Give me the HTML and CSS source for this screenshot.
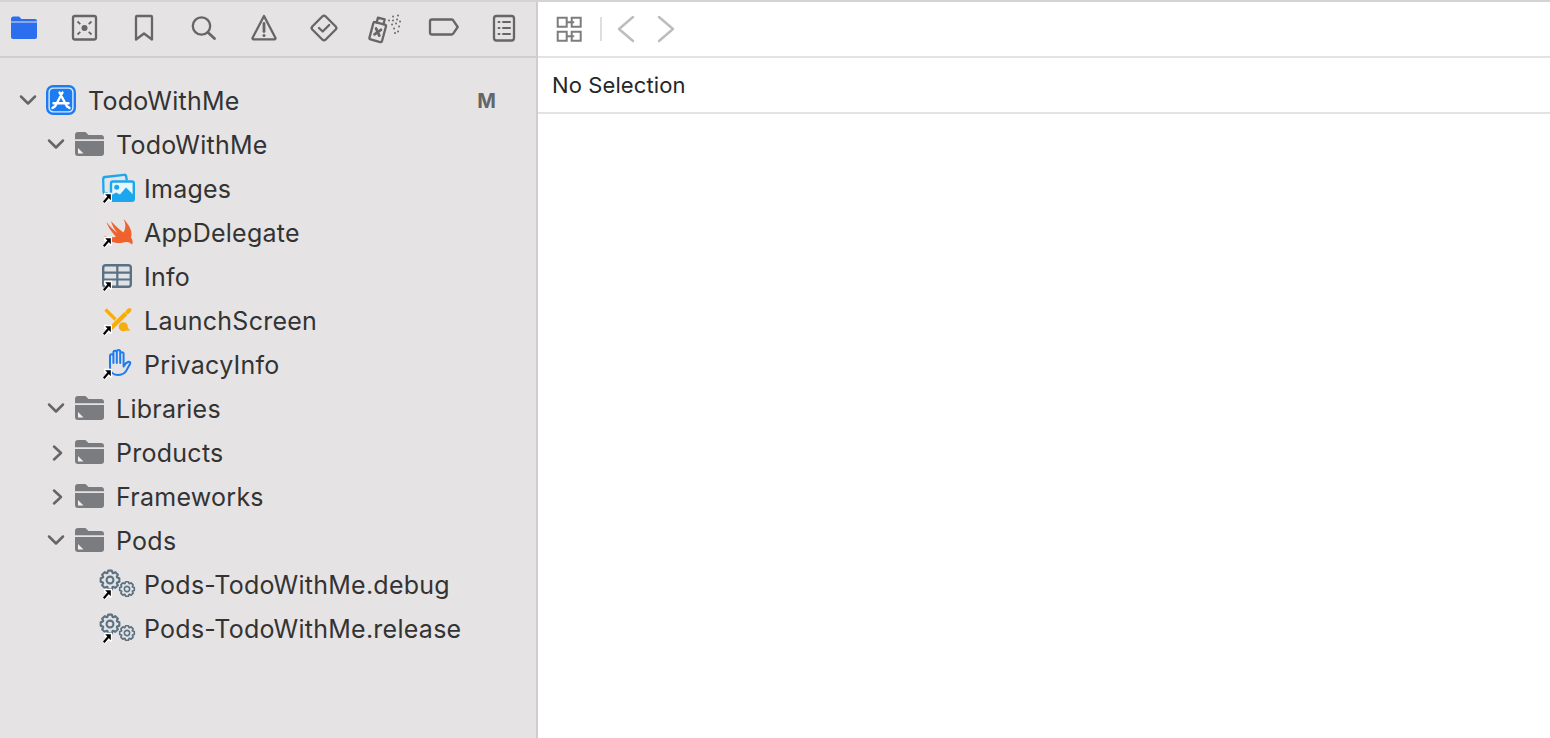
FILE: index.html
```html
<!DOCTYPE html>
<html lang="en">
<head>
<meta charset="utf-8">
<title>TodoWithMe</title>
<link rel="stylesheet" href="styles.css">
</head>
<body>
<svg class="defs" width="0" height="0" aria-hidden="true">
  <defs>
    <g id="folder">
      <path d="M1 6a3 3 0 0 1 3-3h7.500l3 3H27a3 3 0 0 1 3 3v1.200H1z"/>
      <path d="M1 12h29v12a3 3 0 0 1-3 3H4a3 3 0 0 1-3-3z"/>
      <path class="folder-mark" d="M4 19l5.500 5.500H4z"/>
    </g>
    <g id="alias">
      <path class="alias-bg" d="M2 19.800h8v8.700l-2 .3-1.300-1.600-3.200 3.500-3-2.300 3-3.500-1.500-1.600z"/>
      <path class="alias-line" d="M1.800 29.200L6.500 23.800"/>
      <path class="alias-head" d="M3.200 21.200H8.800v6z"/>
    </g>
    <path id="gear" d="M7.050-2.570L9.330-1.810 9.330 1.810 7.050 2.570 6.800 3.170 7.880 5.310 5.310 7.880 3.170 6.800 2.570 7.050 1.810 9.330-1.810 9.330-2.570 7.050-3.170 6.800-5.310 7.880-7.880 5.310-6.800 3.170-7.050 2.570-9.330 1.810-9.330-1.810-7.050-2.570-6.800-3.170-7.880-5.310-5.310-7.880-3.170-6.800-2.570-7.050-1.810-9.330 1.810-9.330 2.570-7.050 3.170-6.800 5.310-7.880 7.880-5.310 6.800-3.170zM3.400 0A3.400 3.400 0 1 1-3.400 0 3.400 3.400 0 1 1 3.400 0z"/>
    <g id="chev-down"><path d="M3 5.500l7 7 7-7"/></g>
    <g id="chev-right"><path d="M8 3.500l7 6.500-7 6.500"/></g>
    <g id="gears">
      <use href="#gear" transform="translate(8 11)"/>
      <use href="#gear" transform="translate(25 20) scale(.78)"/>
    </g>
  </defs>
</svg>

<div class="app">
  <aside class="navigator">
    <div class="tabs">
      <svg class="tab" viewBox="0 0 40 40"><path class="tab-active" d="M7 11a2.500 2.500 0 0 1 2.500-2.500h5.500l2.500 2.500H31a2 2 0 0 1 2 2v.5H7z"/><path class="tab-active" d="M7 14.600h26V29a2 2 0 0 1-2 2H9a2 2 0 0 1-2-2z"/></svg>
      <svg class="tab" viewBox="0 0 40 40"><rect class="st" x="9" y="8" width="23" height="23.500" rx="2"/><circle class="fl" cx="20.500" cy="20" r="3"/><path class="st spoke" d="M13.500 13.500l2.800 2.600M27.500 13.500l-2.800 2.600M13.500 26.500l2.800-2.600M27.500 26.500l-2.800-2.600"/></svg>
      <svg class="tab" viewBox="0 0 40 40"><path class="st" d="M12 9a1 1 0 0 1 1-1h14a1 1 0 0 1 1 1v22.500l-8-6-8 6z"/></svg>
      <svg class="tab" viewBox="0 0 40 40"><circle class="st" cx="17.500" cy="18" r="8.700"/><path class="st thick" d="M24 24.500l6.500 6"/></svg>
      <svg class="tab" viewBox="0 0 40 40"><path class="st" d="M20 8L31.500 30a1 1 0 0 1-.9 1.300H9.400a1 1 0 0 1-.9-1.300z"/><path class="st thick" d="M20 15.500v8"/><circle class="fl" cx="20" cy="27.500" r="1.500"/></svg>
      <svg class="tab" viewBox="0 0 40 40"><path class="st" d="M18.500 8.300a2.200 2.200 0 0 1 3 0L31.700 18.500a2.200 2.200 0 0 1 0 3L21.500 31.700a2.200 2.200 0 0 1-3 0L8.300 21.500a2.200 2.200 0 0 1 0-3z"/><path class="st" d="M15 20l3.700 3.500 6.500-6.500"/></svg>
      <svg class="tab" viewBox="0 0 40 40"><g transform="rotate(15 14 21)"><rect class="st" x="8" y="15" width="13" height="18" rx="1.500"/><path class="st" d="M11 15v-5h7v5"/><path class="st thick" d="M12 21l5 6M17 21l-5 6"/></g><path class="dots" d="M29 8.500h.1M34 7.500h.1M25 12.500h.1M29 12.500h.1M33 11.500h.1M36 13.500h.1M28 16.500h.1M32 15.500h.1M35 18.500h.1M30 20.500h.1M34 23.500h.1M31 25h.1"/></svg>
      <svg class="tab" viewBox="0 0 40 40"><path class="st" d="M8 11.500h19.500a2 2 0 0 1 1.700.9l4.500 6.600-4.500 6.600a2 2 0 0 1-1.700.9H8a2 2 0 0 1-2-2V13.500a2 2 0 0 1 2-2z"/></svg>
      <svg class="tab" viewBox="0 0 40 40"><rect class="st" x="10" y="8" width="20" height="24.500" rx="2.500"/><path class="st thin" d="M14.500 14h1M19 14h7M14.500 20h1M19 20h7M14.500 26h1M19 26h7"/></svg>
    </div>

    <ul class="tree">
      <li class="row d0"><svg class="chev" viewBox="0 0 20 20"><use href="#chev-down"/></svg>
        <svg class="ico" viewBox="0 0 32 32"><rect class="app-frame" x="1.200" y="1.200" width="27.600" height="27.600" rx="6"/><rect class="app-fill" x="3.800" y="3.800" width="22.400" height="22.400" rx="4"/><path class="app-a" d="M16.500 7.500L9 21.500M13.500 7.500L21 21.500M7.500 18.300h15M6.500 23l2.200-1.500M23.500 23l-2.200-1.500"/></svg>
        <span class="name">TodoWithMe</span><span class="badge">M</span></li>
      <li class="row d1"><svg class="chev" viewBox="0 0 20 20"><use href="#chev-down"/></svg>
        <svg class="ico folder" viewBox="0 0 32 32"><use href="#folder"/></svg>
        <span class="name">TodoWithMe</span></li>
      <li class="row d2"><span class="chev"></span>
        <svg class="ico" viewBox="0 0 32 32"><path class="img-back" d="M6 20.500H3.500a2 2 0 0 1-2-1.800L1.200 6a2 2 0 0 1 1.800-2L22 1.800a2 2 0 0 1 2.200 1.700l.6 4"/><rect class="img-front" x="9" y="8.500" width="22.800" height="19.200" rx="2"/><circle class="img-sun" cx="14.700" cy="14.300" r="2.500"/><path class="img-hill" d="M9 27v-4.500l5-3 4 2 6-7 8 8v4.500a1 1 0 0 1-1 1H10a1 1 0 0 1-1-1z"/><use href="#alias"/></svg>
        <span class="name">Images</span></li>
      <li class="row d2"><span class="chev"></span>
        <svg class="ico" viewBox="0 0 32 32"><path class="swift" d="M21.500 2C27.500 8 31 15 29 20.500 31 23 31 26 30 27.500 27.500 24.500 24 24.500 21 25.500 14 27.500 7 24.500 1.500 18.500 5.500 20.500 10 21 14 19.500 10 15.500 6 10 4.500 5 8 9.500 11.500 13 15.500 16 12.500 12.500 10 8.500 9 4 13 8.500 17 12.500 21.500 15.500 24 11 24 6.500 21.500 2z"/><use href="#alias"/></svg>
        <span class="name">AppDelegate</span></li>
      <li class="row d2"><span class="chev"></span>
        <svg class="ico" viewBox="0 0 32 32"><rect class="tbl" x="1.200" y="4.200" width="27.600" height="21.600" rx="2.500"/><path class="tbl-line" d="M1.200 11.700h27.600M1.200 18.500h27.600M15.300 4.200v21.600"/><use href="#alias"/></svg>
        <span class="name">Info</span></li>
      <li class="row d2"><span class="chev"></span>
        <svg class="ico" viewBox="0 0 32 32"><path class="ib-line" d="M3.500 4.500L13.500 14.500"/><path class="ib-pencil" d="M8.700 23.500L24 8.500"/><path class="ib-pencil tip" d="M25.500 7L27.500 5"/><circle class="ib-blob" cx="21.300" cy="21.700" r="4.500"/><path class="ib-blob" d="M21.500 17.500l6.800 8.300-7.300-.2z"/><use href="#alias"/></svg>
        <span class="name">LaunchScreen</span></li>
      <li class="row d2"><span class="chev"></span>
        <svg class="ico" viewBox="0 0 32 32"><path class="hand" d="M8 18V7a1.700 1.700 0 0 1 3.400 0V14M11.400 14V3.500a1.700 1.700 0 0 1 3.400 0V14M14.800 14V2.700a1.700 1.700 0 0 1 3.400 0V14M18.200 14V5a1.700 1.700 0 0 1 3.400 0V17.500c1-2 2.500-4 5-4.700 1.200-.3 2 .6 1.600 1.700-1.200 2.600-3 5-4 7.500C22.500 24.500 18.500 26 15.500 26 11 26 8 23 8 18"/><use href="#alias"/></svg>
        <span class="name">PrivacyInfo</span></li>
      <li class="row d1"><svg class="chev" viewBox="0 0 20 20"><use href="#chev-down"/></svg>
        <svg class="ico folder" viewBox="0 0 32 32"><use href="#folder"/></svg>
        <span class="name">Libraries</span></li>
      <li class="row d1"><svg class="chev" viewBox="0 0 20 20"><use href="#chev-right"/></svg>
        <svg class="ico folder" viewBox="0 0 32 32"><use href="#folder"/></svg>
        <span class="name">Products</span></li>
      <li class="row d1"><svg class="chev" viewBox="0 0 20 20"><use href="#chev-right"/></svg>
        <svg class="ico folder" viewBox="0 0 32 32"><use href="#folder"/></svg>
        <span class="name">Frameworks</span></li>
      <li class="row d1"><svg class="chev" viewBox="0 0 20 20"><use href="#chev-down"/></svg>
        <svg class="ico folder" viewBox="0 0 32 32"><use href="#folder"/></svg>
        <span class="name">Pods</span></li>
      <li class="row d2"><span class="chev"></span>
        <svg class="ico gears" viewBox="0 0 32 32"><use href="#gears"/><use href="#alias"/></svg>
        <span class="name">Pods-TodoWithMe.debug</span></li>
      <li class="row d2"><span class="chev"></span>
        <svg class="ico gears" viewBox="0 0 32 32"><use href="#gears"/><use href="#alias"/></svg>
        <span class="name">Pods-TodoWithMe.release</span></li>
    </ul>
  </aside>

  <main class="editor">
    <div class="jumpbar">
      <svg class="related" viewBox="0 0 28 28"><path d="M2.700 2.700h9v9h-9zM16.700 2.700h9v9h-9zM2.700 16.700h9v9h-9zM16.700 16.700h9v9h-9z"/><path d="M11.700 7.200h7.500M11.700 21.200h7.500"/></svg>
      <span class="sep"></span>
      <svg class="nav" viewBox="0 0 20 30"><path d="M17 3L3 15l14 12"/></svg>
      <svg class="nav" viewBox="0 0 20 30"><path d="M3 3l14 12L3 27"/></svg>
    </div>
    <div class="status">No Selection</div>
  </main>
</div>
</body>
</html>
```

FILE: styles.css
```css
* { box-sizing: border-box; }
html, body { margin: 0; height: 100%; }
body {
  font-family: Inter, "Liberation Sans", sans-serif;
  color: #333;
  background: #fff;
  overflow: hidden;
}
.defs { display: block; height: 0; }
.app {
  display: flex;
  height: 738px;
  border-top: 2px solid #d4d4d4;
}

/* navigator */
.navigator {
  width: 538px;
  flex: none;
  background: #e5e3e4;
  border-right: 2px solid #cfcdce;
}
.tabs {
  display: flex;
  align-items: center;
  gap: 20px;
  height: 56px;
  padding: 0 0 2px 4px;
  border-bottom: 2px solid #cfcdce;
}
.tab { width: 40px; height: 40px; flex: none; }
.st { fill: none; stroke: #666; stroke-width: 2.300; stroke-linejoin: round; stroke-linecap: round; }
.st.thick { stroke-width: 2.800; }
.st.thin { stroke-width: 2; }
.st.spoke { stroke-width: 1.800; stroke-linecap: butt; }
.fl { fill: #666; }
.tab-active { fill: #2c6fee; }
.dots { fill: none; stroke: #666; stroke-width: 1.800; stroke-linecap: round; }

.tree { list-style: none; margin: 0; padding: 21px 0 0; }
.row { display: flex; align-items: center; height: 44px; }
.row.d0 { padding-left: 18px; }
.row.d1 { padding-left: 46px; }
.row.d2 { padding-left: 74px; }
.chev {
  width: 20px;
  height: 20px;
  margin-right: 8px;
  flex: none;
  fill: none;
  stroke: #666;
  stroke-width: 2.500;
  stroke-linecap: round;
  stroke-linejoin: round;
}
.ico { width: 32px; height: 32px; margin-right: 10px; flex: none; overflow: visible; }
.name { font-size: 25px; letter-spacing: .26px; line-height: 44px; color: #333; white-space: nowrap; }
.badge {
  margin-left: auto;
  margin-right: 40px;
  font-size: 20px;
  font-weight: 700;
  color: #666;
}

.folder { fill: #7b7c80; }
.folder-mark { fill: #f0eeef; }
.alias-bg { fill: #fff; stroke: none; }
.alias-line { fill: none; stroke: #000; stroke-width: 2.200; }
.alias-head { fill: #000; stroke: none; }
.app-frame { fill: #d9e9fc; stroke: #1d7cf2; stroke-width: 2.400; }
.app-fill { fill: #1d7cf2; }
.app-a { fill: none; stroke: #fff; stroke-width: 2.400; stroke-linecap: round; }
.img-back { fill: none; stroke: #1aa7ee; stroke-width: 2.300; }
.img-front { fill: #e9f5fc; stroke: #1aa7ee; stroke-width: 2.400; }
.img-sun, .img-hill { fill: #1aa7ee; }
.swift { fill: #f0622d; }
.tbl { fill: #dfe3e6; stroke: #5a7184; stroke-width: 2.400; }
.tbl-line { fill: none; stroke: #5a7184; stroke-width: 2.200; }
.ib-line { fill: none; stroke: #f7ad0c; stroke-width: 3.200; }
.ib-pencil { fill: none; stroke: #f7ad0c; stroke-width: 4.500; }
.ib-pencil.tip { stroke-linecap: round; stroke-width: 4; }
.ib-blob { fill: #f7ad0c; }
.hand { fill: none; stroke: #1d7cf2; stroke-width: 2; stroke-linecap: round; stroke-linejoin: round; }
.gears { fill: none; stroke: #5a7184; stroke-width: 2.100; stroke-linejoin: round; }

/* editor */
.editor { flex: 1; min-width: 0; }
.jumpbar {
  display: flex;
  align-items: center;
  height: 56px;
  padding-left: 17px;
  border-bottom: 2px solid #e3e3e3;
}
.related { width: 28px; height: 28px; flex: none; fill: none; stroke: #7d7d7d; stroke-width: 2; }
.sep { width: 2px; height: 24px; margin: 0 14px 0 17px; background: #dedede; flex: none; }
.nav { width: 20px; height: 30px; margin-right: 20px; flex: none; fill: none; stroke: #bdbdbd; stroke-width: 2.500; stroke-linecap: round; stroke-linejoin: round; }
.status {
  display: flex;
  align-items: center;
  height: 56px;
  padding-left: 14px;
  font-size: 22px;
  letter-spacing: .1px;
  color: #262626;
  border-bottom: 2px solid #e3e3e3;
}
```
